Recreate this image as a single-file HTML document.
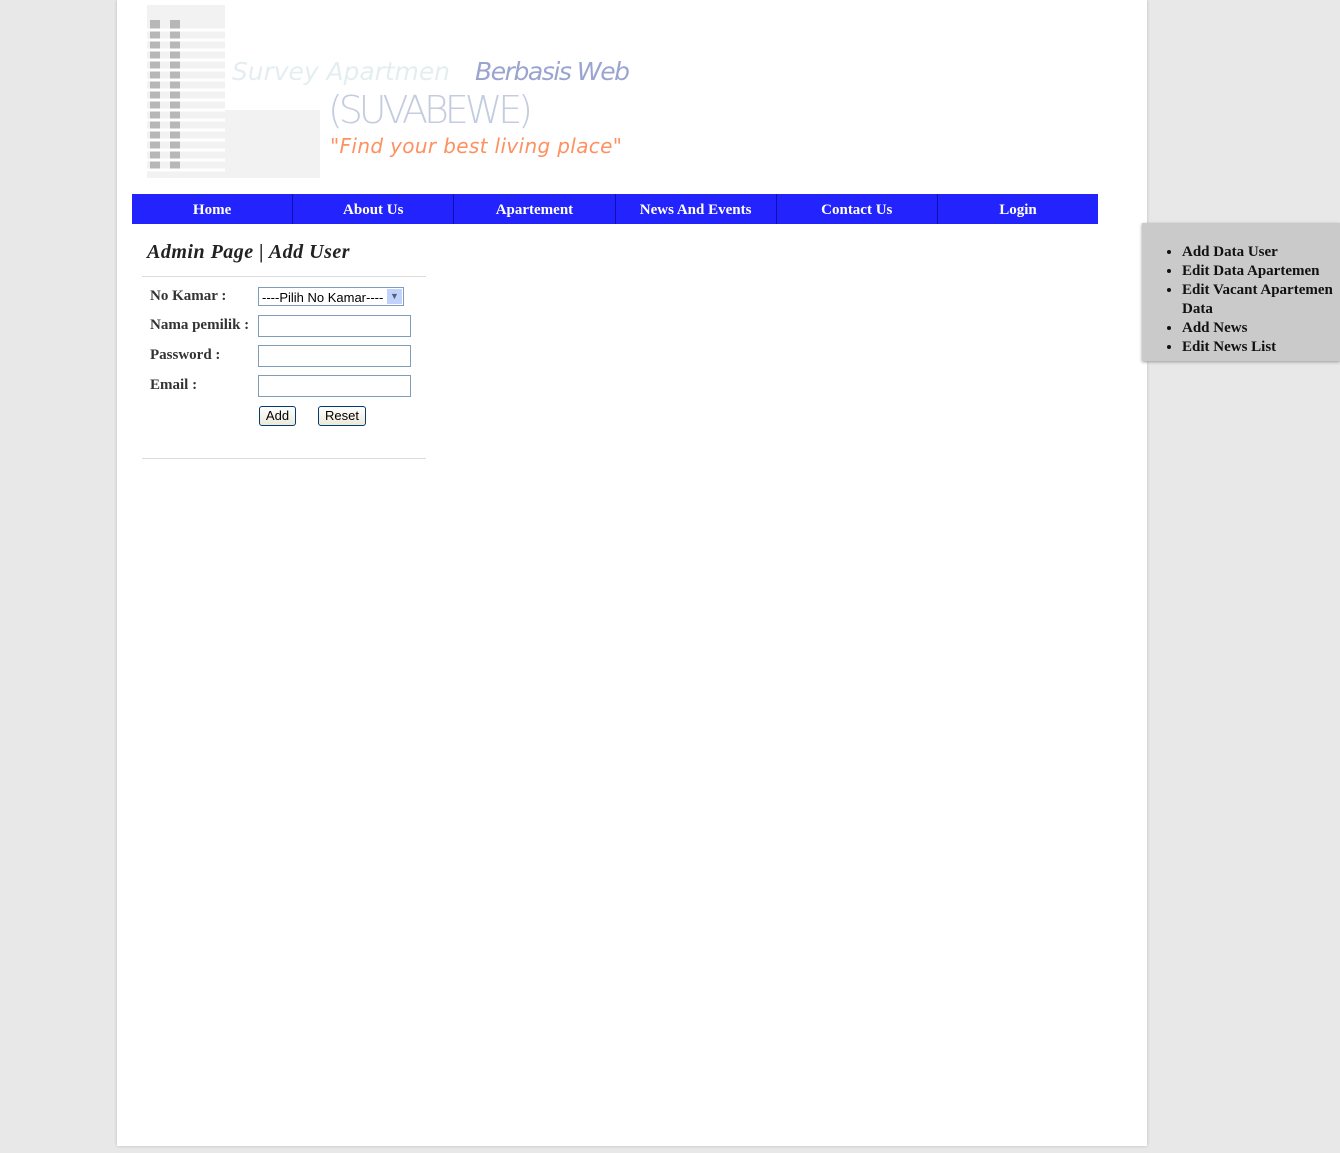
<!DOCTYPE html>
<html><head><style>
body{margin:0;width:1340px;height:1153px;background:#e8e8e8;font-family:"Liberation Serif",serif;position:relative;overflow:hidden}
#wrap{position:absolute;left:117px;top:0;width:1030px;height:1146px;background:#fff;box-shadow:0 0 3px #bbb}
#nav{position:absolute;left:132px;top:194px;width:966px;height:30px;background:#2323fe;display:flex}
#nav div{flex:1;color:#fff;font-weight:bold;font-size:15px;text-align:center;line-height:31px;padding-top:1px;box-sizing:border-box;border-left:1px solid #1010b0}
#nav div:first-child{border-left:none}
h1{position:absolute;left:147px;top:241px;margin:0;font-style:italic;font-weight:bold;font-size:20px;color:#222;letter-spacing:0.5px}
.hr{position:absolute;left:142px;width:284px;height:1px;background:#ddd}
.lbl{position:absolute;left:150px;font-size:15px;color:#333;font-weight:bold}
.in{position:absolute;left:258px;width:151px;height:20px;border:1px solid #7f9db9;background:#fff}
.btn{position:absolute;top:406px;height:18px;border:1px solid #003c74;border-radius:3px;background:linear-gradient(#fff,#ece9d8);font:13px "Liberation Sans",sans-serif;text-align:center;line-height:18px}
#side{position:absolute;left:1142px;top:223px;width:198px;height:138px;background:#cacaca;box-shadow:0 1px 3px #999}
#side ul{margin:20px 0 0;padding-left:40px;font-size:15px;color:#111;line-height:19px;font-weight:bold}
</style></head><body>
<div id="wrap"></div>
<svg style="position:absolute;left:140px;top:0" width="500" height="180">
<rect x="7" y="5" width="78" height="173" fill="#f2f2f2"/>
<g fill="#888" opacity=".55">
<rect x="10" y="20" width="10" height="150"/><rect x="30" y="20" width="10" height="150"/>
</g>
<g stroke="#fff" stroke-width="3"><path d="M5 30H90M5 40H90M5 50H90M5 60H90M5 70H90M5 80H90M5 90H90M5 100H90M5 110H90M5 120H90M5 130H90M5 140H90M5 150H90M5 160H90M5 170H90"/></g>
<rect x="85" y="110" width="95" height="68" fill="#f2f2f2"/>
<text x="92" y="80" font-family="DejaVu Sans" font-style="italic" font-size="25" fill="#e4eef2" textLength="218">Survey Apartmen</text>
<text x="335" y="80" font-family="DejaVu Sans" font-style="italic" font-size="25" fill="#9aa4d0" textLength="155">Berbasis Web</text>
<text x="188" y="123" font-family="DejaVu Sans" font-weight="200" font-size="38" fill="#c4cce0" textLength="205">(SUVABEWE)</text>
<text x="190" y="153" font-family="DejaVu Sans" font-style="italic" font-size="20" fill="#ff9060" textLength="292">"Find your best living place"</text>
</svg>
<div id="nav"><div>Home</div><div>About Us</div><div>Apartement</div><div>News And Events</div><div>Contact Us</div><div>Login</div></div>
<h1>Admin Page | Add User</h1>
<div class="hr" style="top:276px"></div>
<div class="lbl" style="top:288px">No Kamar :</div>
<div class="lbl" style="top:317px">Nama pemilik :</div>
<div class="lbl" style="top:347px">Password :</div>
<div class="lbl" style="top:377px">Email :</div>
<div class="in" style="top:287px;height:19px;font:13px 'Liberation Sans',sans-serif;line-height:19px;padding-left:3px;box-sizing:border-box;width:146px">----Pilih No Kamar----<span style="position:absolute;right:1px;top:1px;width:15px;height:15px;background:#c1d3fb;color:#4d6185;font-size:9px;text-align:center;line-height:15px">▼</span></div>
<div class="in" style="top:315px"></div>
<div class="in" style="top:345px"></div>
<div class="in" style="top:375px"></div>
<div class="btn" style="left:259px;width:35px">Add</div>
<div class="btn" style="left:318px;width:46px">Reset</div>
<div class="hr" style="top:458px"></div>
<div id="side"><ul><li>Add Data User</li><li>Edit Data Apartemen</li><li style="white-space:nowrap">Edit Vacant Apartemen<br>Data</li><li>Add News</li><li>Edit News List</li></ul></div>
</body></html>
